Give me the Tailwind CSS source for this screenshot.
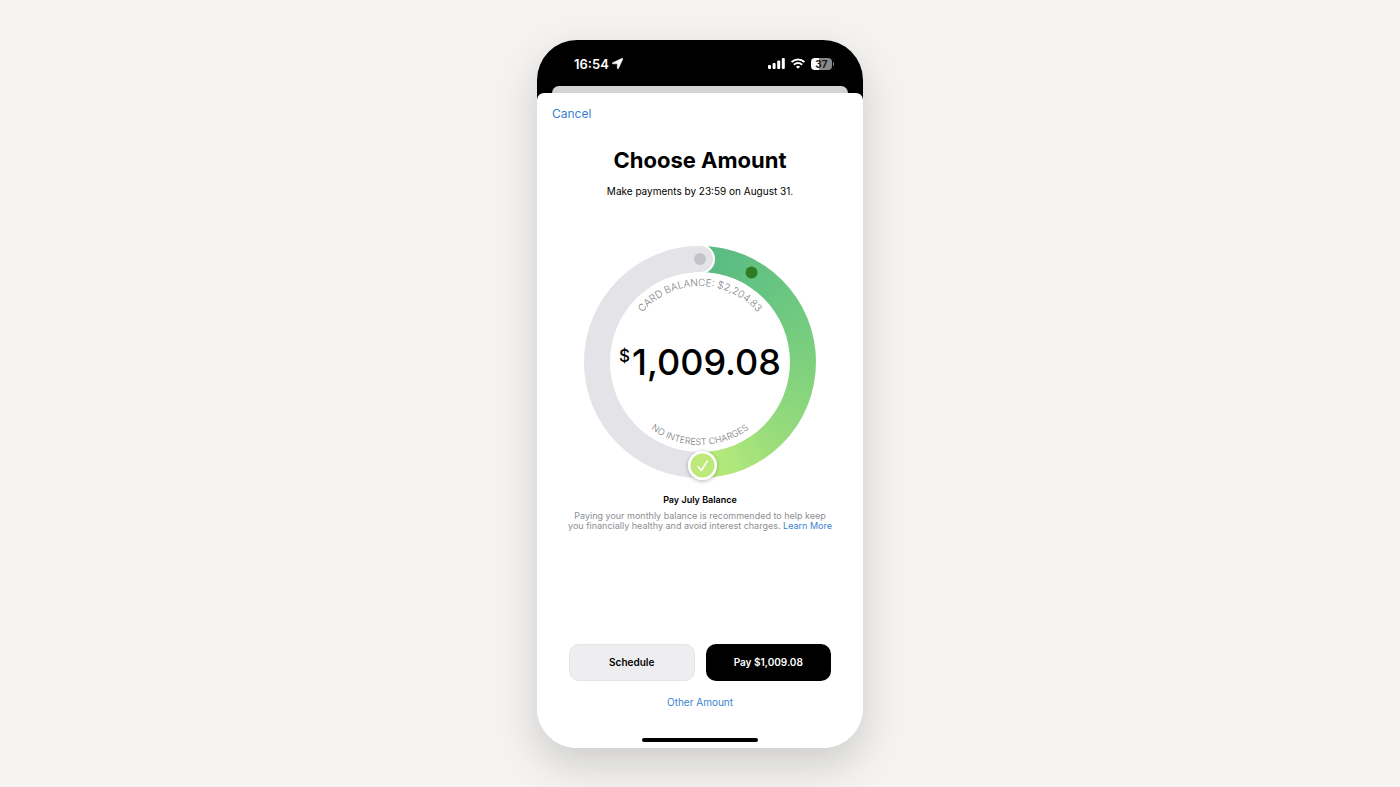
<!DOCTYPE html>
<html lang="en">
<head>
<meta charset="utf-8">
<meta name="viewport" content="width=device-width, initial-scale=1">
<title>Choose Amount</title>
<script src="https://cdn.jsdelivr.net/npm/@tailwindcss/browser@4"></script>
</head>
<body class="flex min-h-screen items-center justify-center bg-[#f4f3f1] py-[39px] font-['Inter','Roboto',sans-serif] text-black">
<div class="flex min-h-[708px] w-full max-w-[326px] flex-col overflow-hidden rounded-[40px] bg-linear-to-b from-black from-50% to-white to-50% shadow-[0_16px_40px_rgba(0,0,0,0.16)]">
  <header class="flex h-[46px] items-center justify-between pt-0.5 pr-[29px] pl-[37px] text-white">
    <div class="flex items-center gap-[3px]">
      <span class="text-[13px] leading-4 font-semibold">16:54</span>
      <svg class="size-[11px]" viewBox="0 0 10 10" fill="currentColor" aria-hidden="true"><path d="M9.200.2.5 4.300c-.6.3-.5 1 .1 1h3.900c.2 0 .3.1.3.3v3.800c0 .7.8.8 1.100.2L9.900.9C10.100.4 9.700 0 9.200.2Z" stroke="currentColor" stroke-width=".4"/></svg>
    </div>
    <div class="flex items-center gap-1.5">
      <svg class="h-[11px] w-[17px]" viewBox="0 0 17 11" fill="currentColor" aria-hidden="true"><rect y="7" width="3" height="4" rx="1"/><rect x="4.600" y="5" width="3" height="6" rx="1"/><rect x="9.200" y="2.500" width="3" height="8.500" rx="1"/><rect x="13.800" width="3" height="11" rx="1"/></svg>
      <svg class="h-[11px] w-[14px]" viewBox="0 0 14 11" fill="none" stroke="currentColor" stroke-width="2" aria-hidden="true"><path d="M.6 4.100a9.200 9.200 0 0 1 12.800 0M2.900 6.700a5.900 5.900 0 0 1 8.200 0"/><path d="M7 10.800 4.900 8.700a3 3 0 0 1 4.200 0Z" fill="currentColor" stroke="none"/></svg>
      <div class="flex items-center gap-px">
        <span class="flex h-[12px] w-[21px] items-center justify-center rounded-[4px] bg-linear-to-r from-white from-37% to-[#8a8a8a] to-37% text-[10px] leading-none font-bold text-[#1c1c1c]">37</span>
        <span class="h-1 w-px rounded-r-full bg-[#8a8a8a]"></span>
      </div>
    </div>
  </header>
  <div class="mx-[15px] h-[7px] rounded-t-[7px] bg-[#d4d4d7]"></div>
  <main class="flex grow flex-col items-center rounded-t-[7px] bg-white px-[32px]">
    <button type="button" class="-ml-[17px] mt-3 self-start text-[12px] leading-[18px] text-[#3b7fd0]">Cancel</button>
    <h1 class="mt-[22px] text-[22px] leading-[30px] font-bold whitespace-nowrap">Choose Amount</h1>
    <p class="mt-2 text-[10px] leading-4 whitespace-nowrap">Make payments by 23:59 on August 31.</p>

    <div class="mt-[47px] grid size-[232px] place-items-center">
      <div class="col-start-1 row-start-1 size-full rounded-full bg-[conic-gradient(#57b984_0deg,#68c581_45deg,#7dd07e_90deg,#98dc7b_135deg,#b9ec7c_175deg,#b9ec7c_180deg,#e4e4e8_180deg)]"></div>
      <svg class="col-start-1 row-start-1 size-full overflow-visible" viewBox="-116 -116 232 232" role="img" aria-label="Payment dial">
        <defs>
          <path id="upper" d="M-76 0A76 76 0 0 1 76 0"/>
          <path id="lower" d="M-83 0A83 83 0 0 0 83 0"/>
          <filter id="lift" x="-50%" y="-50%" width="200%" height="200%"><feDropShadow dx="0" dy="1" stdDeviation="2" flood-opacity=".3"/></filter>
        </defs>
        <circle r="90" fill="#fff"/>
        <circle cx="0" cy="-103" r="15" fill="#fff"/>
        <path d="M-30-98.500A103 103 0 0 1 0-103" fill="none" stroke="#e4e4e8" stroke-width="26" stroke-linecap="round"/>
        <circle cx="0" cy="-103" r="6" fill="#c2c2ca"/>
        <circle cx="51.500" cy="-89.500" r="6" fill="#2f7d22"/>
        <text font-size="10" font-weight="300" fill="#808084" text-anchor="middle"><textPath href="#upper" startOffset="50%">CARD BALANCE: $2,204.83</textPath></text>
        <text font-size="9" font-weight="300" fill="#77777b" text-anchor="middle"><textPath href="#lower" startOffset="50%">NO INTEREST CHARGES</textPath></text>
        <circle cx="2.500" cy="103.500" r="14.500" fill="#fff" filter="url(#lift)"/>
        <circle cx="2.500" cy="103.500" r="12" fill="#bde97a"/>
        <path d="m-2 104.500 3.300 4 6-9.500" fill="none" stroke="#fff" stroke-width="1.500" stroke-linecap="round" stroke-linejoin="round"/>
      </svg>
      <p class="z-10 col-start-1 row-start-1 flex items-start gap-0.5 whitespace-nowrap"><span class="pt-1.5 text-[17px] leading-5 font-medium">$</span><span class="text-[36px] leading-[44px] font-medium">1,009.08</span></p>
    </div>

    <h2 class="mt-4 text-[9px] leading-3 font-semibold">Pay July Balance</h2>
    <p class="mt-[5px] text-center text-[9px] leading-[10px] whitespace-nowrap text-[#8e8e92]">Paying your monthly balance is recommended to help keep<br>you financially healthy and avoid interest charges. <a href="#learn" class="text-[#3b7fd0]">Learn More</a></p>

    <div class="mt-auto grid w-full grid-cols-2 gap-[11px]">
      <button type="button" class="h-[37px] rounded-[10px] border border-[#e4e4e6] bg-[#eeeef0] text-[10px] font-semibold">Schedule</button>
      <button type="button" class="h-[37px] rounded-[10px] bg-black text-[10px] font-semibold text-white">Pay $1,009.08</button>
    </div>
    <button type="button" class="mt-3 text-[10px] leading-[18px] text-[#3b7fd0]">Other Amount</button>
    <div class="mt-[27px] mb-1.5 h-[4px] w-[116px] rounded-full bg-black"></div>
  </main>
</div>
</body>
</html>
